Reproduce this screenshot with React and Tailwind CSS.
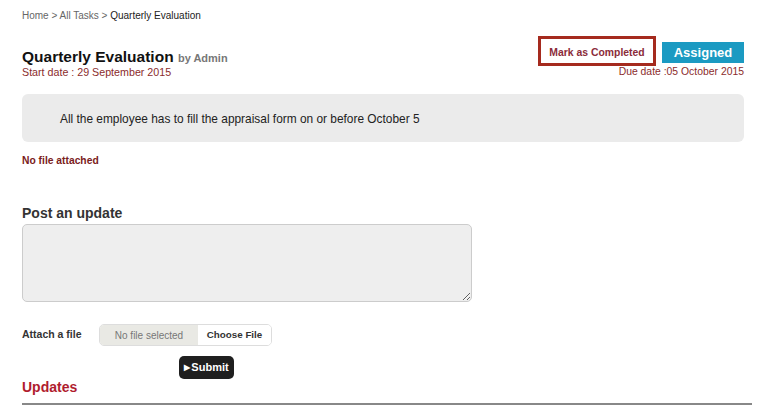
export default function App() {
  return (
    <div className="min-h-[405px] bg-white px-[22px] pt-[9px] font-['Liberation_Sans',Arial,sans-serif] text-[#222]">
      <nav className="text-[10px] leading-[14px] text-[#666]">
        Home &gt; All Tasks &gt; <span className="text-[#222]">Quarterly Evaluation</span>
      </nav>

      <div className="mt-[13px] flex items-start justify-between pr-[2px]">
        <div className="pt-[11px]">
          <h1 className="text-[15.5px] font-bold leading-[20px] text-[#111]">
            Quarterly Evaluation <span className="text-[11px] text-[#777]">by Admin</span>
          </h1>
          <p className="mt-[-3px] text-[10.7px] leading-[14px] text-[#8b2c2c]">Start date : 29 September 2015</p>
        </div>
        <div className="flex flex-col items-end">
          <div className="flex items-start gap-[6px]">
            <button className="h-[30px] w-[118px] border-[3px] border-[#a52a1e] bg-white pt-[4px] text-[10.4px] font-bold text-[#8b2c3a]">
              Mark as Completed
            </button>
            <span className="mt-[6px] flex h-[21px] w-[82px] items-center justify-center bg-[#1b9ac2] text-[13px] font-bold text-white">
              Assigned
            </span>
          </div>
          <p className="mt-[-1px] text-[10.4px] leading-[14px] text-[#8b2c2c]">Due date :05 October 2015</p>
        </div>
      </div>

      <div className="mt-[15px] mr-[2px] flex h-[48px] items-center rounded-[6px] bg-[#ebebeb] pl-[38px] pt-[4px] text-[11.9px] text-[#222]">
        All the employee has to fill the appraisal form on or before October 5
      </div>

      <p className="mt-[12px] text-[10.3px] font-bold leading-[14px] text-[#7a2020]">No file attached</p>

      <h2 className="mt-[36px] text-[14px] font-bold leading-[18px] text-[#333]">Post an update</h2>
      <textarea className="mt-[2px] block h-[78px] w-[450px] rounded-[5px] border border-[#ccc] bg-[#eeeeee]" />

      <div className="mt-[22px] flex items-center">
        <span className="w-[77px] text-[10.5px] font-bold text-[#333]">Attach a file</span>
        <div className="flex h-[22px] w-[173px] overflow-hidden rounded-[5px] border border-[#ddd]">
          <span className="flex w-[98px] items-center justify-center bg-[#e9e9e4] text-[10px] text-[#777]">No file selected</span>
          <span className="flex flex-1 items-center justify-center bg-white text-[9.8px] font-bold text-[#333]">Choose File</span>
        </div>
      </div>

      <div className="mt-[10px] pl-[157px]">
        <button className="flex h-[23px] w-[55px] items-center justify-center rounded-[5px] bg-[#1f1f1f] text-[11px] font-bold text-white">
          <span className="mr-[1px] text-[8px]">▶</span>Submit
        </button>
      </div>

      <h2 className="mt-[-1px] text-[14px] font-bold leading-[18px] text-[#b01c2e]">Updates</h2>
      <div className="mt-[7px] mr-[-6px] h-[2px] bg-[#888]" />
    </div>
  );
}
